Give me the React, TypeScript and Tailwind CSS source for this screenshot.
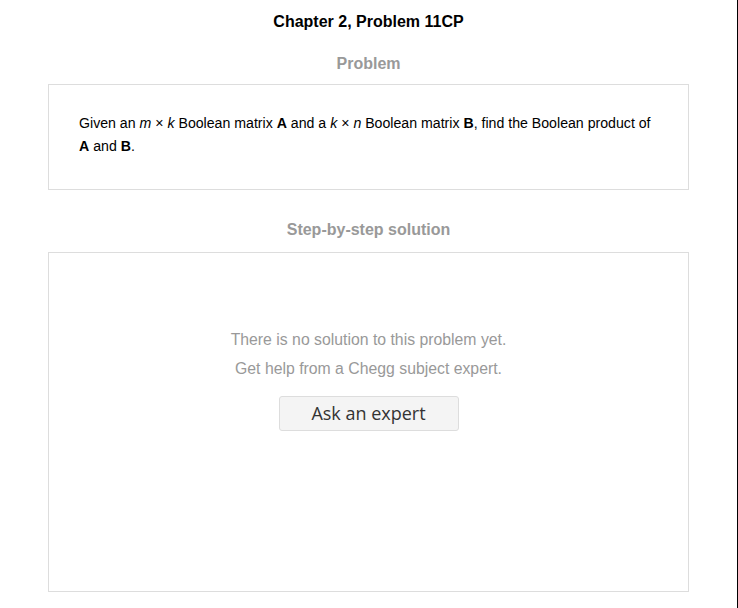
import React from "react";

export default function App() {
  return (
    <div className="w-[738px] h-[608px] bg-white overflow-hidden" style={{ fontFamily: '"Liberation Sans", Arial, sans-serif' }}>
      <div className="w-[738px] h-[608px] border-r border-black flex flex-col px-[48px]">
        <h1 className="pt-[13px] text-center text-[16px] leading-[18px] font-bold text-black">Chapter 2, Problem 11CP</h1>
        <h2 className="mt-[24px] text-center text-[16px] leading-[18px] font-bold text-[#999]">Problem</h2>
        <div className="mt-[11px] h-[106px] border border-[#ddd] pl-[30px] pr-[30px] pt-[27px] text-[14.15px] leading-[23px] text-black">
          <p>
            Given an <i>m</i> × <i>k</i> Boolean matrix <b>A</b> and a <i>k</i> × <i>n</i> Boolean matrix <b>B</b>, find the Boolean product of <b>A</b> and <b>B</b>.
          </p>
        </div>
        <h2 className="mt-[31px] text-center text-[16px] leading-[18px] font-bold text-[#999]">Step-by-step solution</h2>
        <div className="mt-[13px] h-[340px] border border-[#ddd] flex flex-col items-center pt-[72px]">
          <p className="text-[15.8px] leading-[29px] text-[#999]">There is no solution to this problem yet.</p>
          <p className="text-[15.8px] leading-[29px] text-[#999]">Get help from a Chegg subject expert.</p>
          <button
            className="mt-[13px] w-[180px] h-[35px] rounded-[3px] border border-[#ddd] bg-[#f4f4f4] text-[18px] text-[#333] flex items-center justify-center"
            style={{ fontFamily: '"Open Sans", "Noto Sans", sans-serif' }}
          >
            Ask an expert
          </button>
        </div>
      </div>
    </div>
  );
}
